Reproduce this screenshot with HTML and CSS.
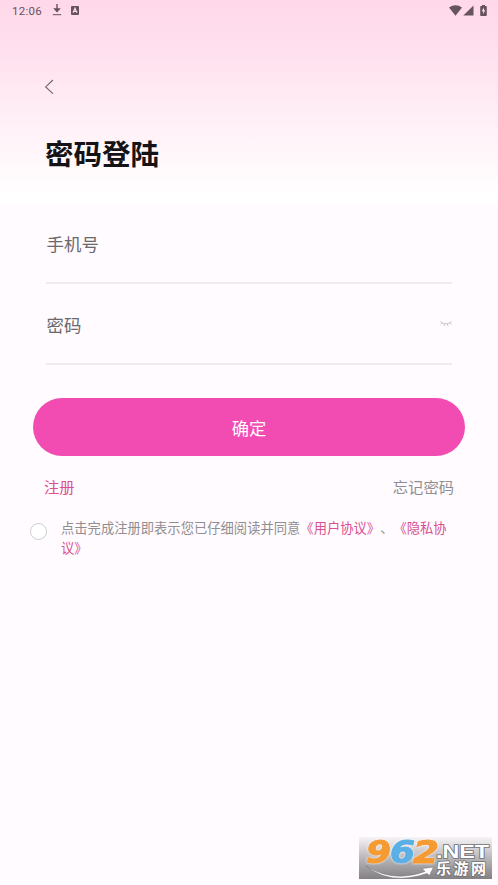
FILE: index.html
```html
<!DOCTYPE html>
<html lang="zh-CN">
<head>
<meta charset="utf-8">
<title>密码登陆</title>
<link rel="stylesheet" href="styles.css">
</head>
<body>
<main class="screen">
  <header class="hero">
    <div class="status">
      <span class="time">12:06</span>
      <svg class="download" width="10" height="12" viewBox="0 0 10 12"><path d="M5 0v7M2.800 5 5 7.400 7.200 5z" fill="currentColor" stroke="currentColor" stroke-width="1.400"/><path d="M.8 10.700h8.400" stroke="currentColor" stroke-width="1"/></svg>
      <svg class="app" width="8" height="9" viewBox="0 0 8 9"><rect width="8" height="9" rx="1" fill="currentColor"/><path d="M2 6.800 4 2.200l2 4.600M2.800 5.400h2.400" fill="none" stroke="#ffdfec" stroke-width="1.100"/></svg>
      <svg class="wifi" width="13" height="11" viewBox="0 0 13 11"><path d="M0 2.600Q6.500-2 13 2.600L6.500 10.800z" fill="currentColor"/></svg>
      <svg class="signal" width="11" height="11" viewBox="0 0 11 11"><path d="M10.500.5v10H.3z" fill="currentColor"/></svg>
      <svg class="battery" width="7" height="11" viewBox="0 0 7 11"><path d="M2 0h3v1h1q.8 0 .8.8v8.400q0 .8-.8.8H1q-.8 0-.8-.8V1.800q0-.8.8-.8h1z" fill="currentColor"/><path d="M4 2.500 1.700 6.200h1.400V9l2.200-3.800H4z" fill="#ffdfec"/></svg>
    </div>
    <svg class="back" width="10" height="16" viewBox="0 0 10 16"><path d="M8.900 1 1.700 7.900l7.200 6.800" fill="none" stroke="#6d666b" stroke-width="1.100"/></svg>
    <h1>密码登陆</h1>
  </header>
  <form class="form">
    <div class="field"><span>手机号</span></div>
    <div class="field"><span>密码</span>
      <svg class="eye" width="12" height="6" viewBox="0 0 12 6"><path d="M.4.600Q6 5.200 11.600.6M2 2 .8 3.400M4.500 3 4 5M7.500 3 8 5M10 2l1.200 1.400" fill="none" stroke="#b9b6b9" stroke-width=".8"/></svg>
    </div>
    <button type="button">确定</button>
    <div class="links"><a class="accent">注册</a><a class="muted">忘记密码</a></div>
    <label class="agree"><i class="radio"></i><span>点击完成注册即表示您已仔细阅读并同意<b>《用户协议》</b>、<b>《隐私协议》</b></span></label>
  </form>
  <svg class="mark" width="133" height="42" viewBox="0 0 133 42">
    <defs><linearGradient id="shade" x2="0" y2="1"><stop offset="0" stop-color="#f7f4f7"/><stop offset=".5" stop-color="#b9b7b9"/><stop offset="1" stop-color="#828082"/></linearGradient></defs>
    <rect width="133" height="42" fill="url(#shade)"/>
    <path d="M7 29Q34 46 66 34.500l-3-3 11.500-1.500-4 8.500-2.500-2Q31 49 7 29z" fill="#fff" stroke="#777" stroke-width=".6"/>
    <g class="digits">
      <text x="7" y="26" textLength="25" lengthAdjust="spacingAndGlyphs" fill="#f69a32" stroke="#f69a32">9</text>
      <text x="31" y="26" textLength="25" lengthAdjust="spacingAndGlyphs" fill="#5aafe5" stroke="#5aafe5">6</text>
      <text x="54" y="26" textLength="26" lengthAdjust="spacingAndGlyphs" fill="#f69a32" stroke="#f69a32">2</text>
    </g>
    <text class="net" x="77" y="20.500" textLength="53" lengthAdjust="spacingAndGlyphs">.NET</text>
    <text class="name" x="77" y="37" textLength="50" lengthAdjust="spacing">乐游网</text>
  </svg>
</main>
</body>
</html>
```
FILE: styles.css
```css
* { box-sizing: border-box; }
body {
  margin: 0;
  background: #fffbff;
  font-family: "Noto Sans CJK SC", sans-serif;
  text-spacing-trim: space-all;
}
.screen {
  position: relative;
  height: 885px;
  overflow: hidden;
}
.hero {
  height: 203px;
  background: linear-gradient(#ffd8e9 0, #ffdeed 40px, #ffe9f3 90px, #fff6fa 150px, #fff 195px);
}
.status {
  display: flex;
  align-items: center;
  height: 20px;
  padding: 0 11px 0 12px;
  color: #66535d;
}
.time {
  width: 40px;
  padding-top: 1px;
  font: 11.500px/20px Roboto, sans-serif;
  letter-spacing: .3px;
}
.app { margin-left: 9px; }
.wifi { margin-left: auto; }
.signal { margin-left: 1px; }
.battery { margin-left: 6px; }
.back {
  display: block;
  margin: 59px 0 0 44px;
}
h1 {
  margin: 37px 0 0 45px;
  color: #151315;
  font-size: 28.500px;
  font-weight: 700;
  line-height: 42px;
}
.form { padding: 0 33px; }
.field {
  display: flex;
  align-items: center;
  justify-content: space-between;
  height: 81px;
  margin: 0 13px;
  padding: 2px 0 0 .6px;
  border-bottom: 2px solid #eeebee;
  color: #6c696c;
  font-size: 17.400px;
  line-height: 26px;
}
.eye { margin-bottom: 2px; }
button {
  display: block;
  width: 432px;
  height: 58px;
  margin-top: 33px;
  padding: 2px 0 0;
  border: 0;
  border-radius: 29px;
  background: #f24bb1;
  color: #fff;
  font: 17.300px/56px "Noto Sans CJK SC", sans-serif;
}
.links {
  display: flex;
  justify-content: space-between;
  margin: 18px 11px 0;
  font-size: 15.300px;
  line-height: 24px;
}
.accent, .agree b { color: #da5090; }
.muted { color: #918e91; }
.agree {
  display: flex;
  margin: 20px 0 0 -3px;
  color: #918e91;
  font-size: 13.300px;
  line-height: 20px;
}
.agree b { font-weight: 400; }
.agree span { width: 392px; }
.radio {
  flex: none;
  width: 17px;
  height: 17px;
  margin: 5px 14px 0 0;
  border: 1px solid #cecbce;
  border-radius: 50%;
  background: #fff;
}
.mark {
  position: absolute;
  right: 6px;
  bottom: 6px;
}
.digits {
  font: italic 700 32px "DejaVu Sans", sans-serif;
  stroke-width: 1px;
  filter: drop-shadow(0 0 1px #fff);
}
.net, .name {
  fill: #fff;
  stroke: #737173;
  stroke-width: 1.500px;
  paint-order: stroke;
}
.net { font: 700 18px "Liberation Sans", sans-serif; }
.name { font: 700 15px "Noto Sans CJK SC", sans-serif; }
```
